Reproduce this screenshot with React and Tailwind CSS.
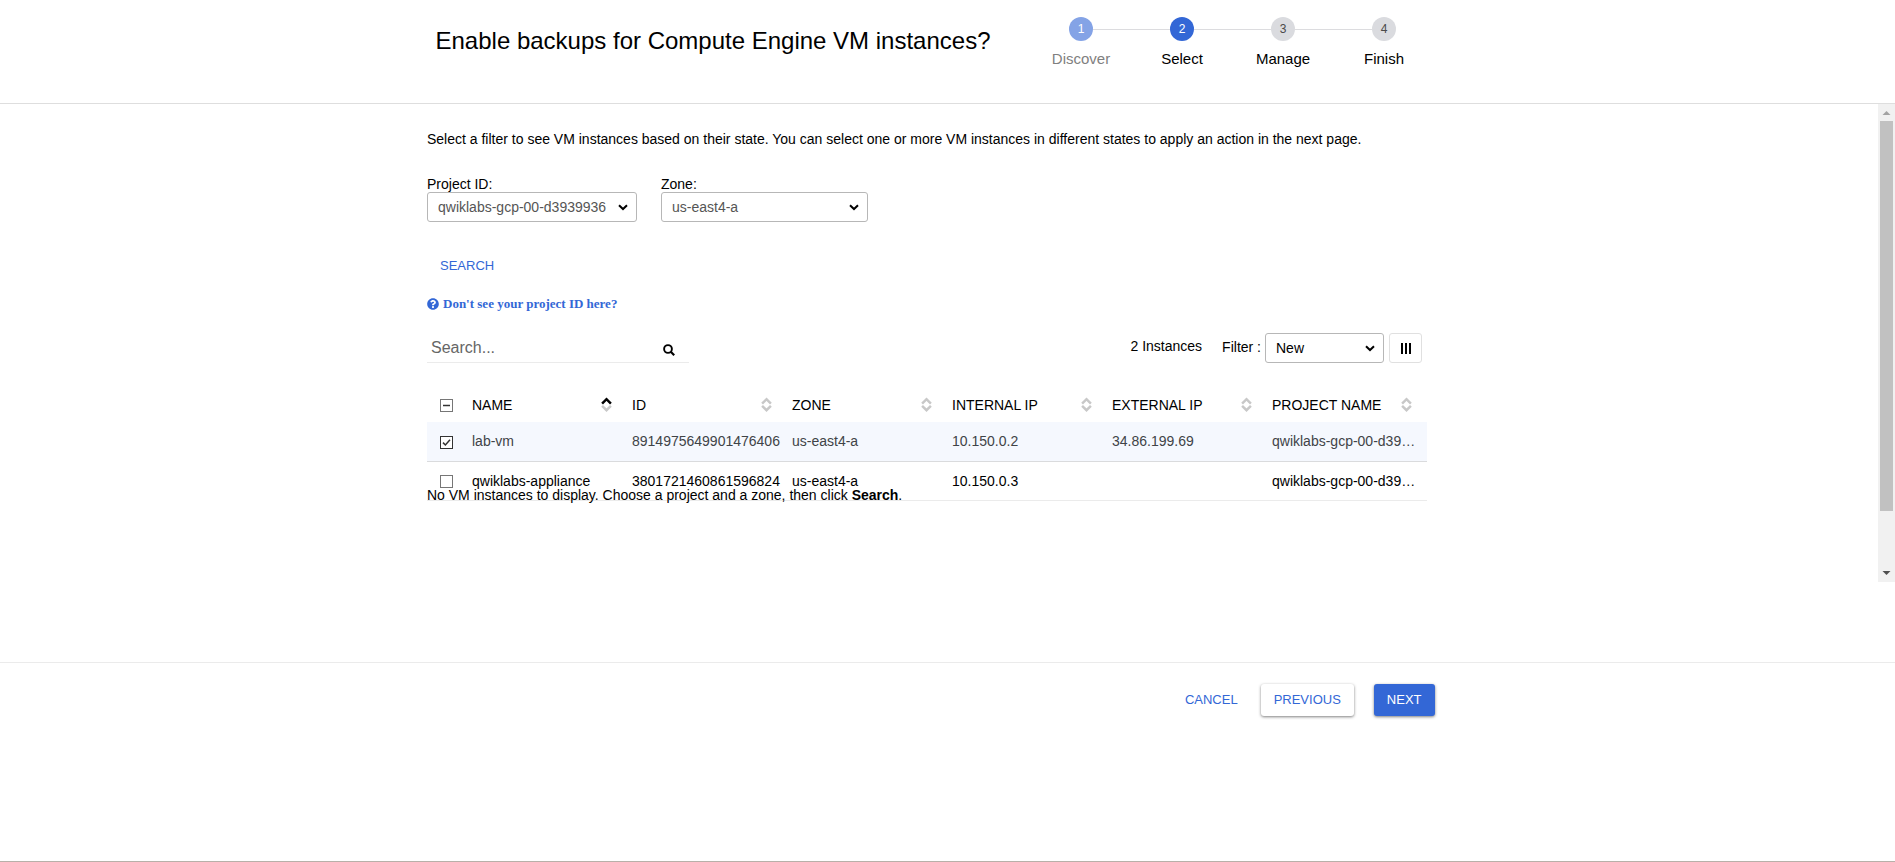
import { useEffect, useRef } from "react";
import { FaQuestionCircle } from "react-icons/fa";

const steps = [
  { label: "Discover", state: "done" },
  { label: "Select", state: "active" },
  { label: "Manage", state: "todo" },
  { label: "Finish", state: "todo" },
];

const circleStyles = {
  done: "bg-[#84a3e6] text-white",
  active: "bg-[#3367d6] text-white",
  todo: "bg-[#dadbdf] text-[#4a4a4a]",
};

const columns = ["NAME", "ID", "ZONE", "INTERNAL IP", "EXTERNAL IP", "PROJECT NAME"];

const rows = [
  {
    selected: true,
    cells: ["lab-vm", "8914975649901476406", "us-east4-a", "10.150.0.2", "34.86.199.69", "qwiklabs-gcp-00-d39…"],
  },
  {
    selected: false,
    cells: ["qwiklabs-appliance", "3801721460861596824", "us-east4-a", "10.150.0.3", "", "qwiklabs-gcp-00-d39…"],
  },
];

function Stepper() {
  return (
    <ol className="flex pt-[17px]">
      {steps.map((step, i) => (
        <li key={step.label} className="flex w-[101px] flex-col items-center gap-2">
          <div className="flex w-full items-center">
            <span className={i === 0 ? "h-px flex-1" : "h-px flex-1 bg-[#dcdcdf]"} />
            <span
              className={`flex size-6 items-center justify-center rounded-full text-xs ${circleStyles[step.state]}`}
            >
              {i + 1}
            </span>
            <span className={i === steps.length - 1 ? "h-px flex-1" : "h-px flex-1 bg-[#dcdcdf]"} />
          </div>
          <span className={step.state === "done" ? "text-[15px] leading-5 text-[#808080]" : "text-[15px] leading-5"}>
            {step.label}
          </span>
        </li>
      ))}
    </ol>
  );
}

function Select({ id, value, className }) {
  return (
    <div className={`grid items-center ${className}`}>
      <select
        id={id}
        defaultValue={value}
        className="col-start-1 row-start-1 h-[30px] w-full appearance-none rounded-[3px] border border-[#b7b7b7] bg-white pl-2.5 pr-7 text-sm leading-5"
      >
        <option>{value}</option>
      </select>
      <svg
        viewBox="0 0 10 7"
        className="pointer-events-none col-start-1 row-start-1 mr-[9px] h-[7px] w-2.5 justify-self-end"
        fill="none"
        stroke="#000"
        strokeWidth="2"
      >
        <path d="M1 1.2 5 5l4-3.8" />
      </svg>
    </div>
  );
}

function Checkbox({ label, checked, mixed }) {
  const ref = useRef(null);
  useEffect(() => {
    ref.current.indeterminate = Boolean(mixed);
  }, [mixed]);
  return (
    <span className="grid size-[13px] place-items-center">
      <input
        ref={ref}
        type="checkbox"
        aria-label={label}
        defaultChecked={checked}
        className={`col-start-1 row-start-1 size-[13px] appearance-none border bg-white ${
          checked ? "border-[#333]" : "border-[#767676]"
        }`}
      />
      {(checked || mixed) && (
        <svg
          viewBox="0 0 9 9"
          className="pointer-events-none col-start-1 row-start-1 size-[9px]"
          fill="none"
          stroke="#333"
          strokeWidth="1.5"
        >
          <path d={mixed ? "M1 4.5h7" : "M1 4.6 3.4 7 8 1.8"} />
        </svg>
      )}
    </span>
  );
}

function SortIcon({ ascending }) {
  return (
    <svg viewBox="0 0 11 16" className="h-4 w-[11px]" fill="none" strokeWidth="2.5">
      <path d="M1.1 6.6 5.5 2.2 9.9 6.6" stroke={ascending ? "#000" : "#c8c8c8"} />
      <path d="M1.1 8.8 5.5 13.2 9.9 8.8" stroke="#c8c8c8" />
    </svg>
  );
}

function InstanceTable() {
  return (
    <table className="mt-[25px] w-full table-fixed border-collapse text-left text-sm leading-5">
      <thead>
        <tr className="h-[34px]">
          <th className="w-10 pl-[13px]">
            <Checkbox label="Select all instances" mixed />
          </th>
          {columns.map((name, i) => (
            <th key={name} className="pl-[5px] pr-[15px] font-normal">
              <button type="button" className="flex w-full items-center justify-between">
                {name}
                <SortIcon ascending={i === 0} />
              </button>
            </th>
          ))}
        </tr>
      </thead>
      <tbody>
        {rows.map((row) => (
          <tr
            key={row.cells[0]}
            className={
              row.selected
                ? "h-[39px] border-b border-[#dadbdd] bg-[#f5f8fe] text-[#404347]"
                : "h-[39px] border-b border-[#ebebeb]"
            }
          >
            <td className="pl-[13px] pt-0.5">
              <Checkbox label={`Select ${row.cells[0]}`} checked={row.selected} />
            </td>
            {row.cells.map((cell, i) => (
              <td key={columns[i]} className="truncate pl-[5px] pr-1">
                {cell}
              </td>
            ))}
          </tr>
        ))}
      </tbody>
    </table>
  );
}

function Scrollbar() {
  return (
    <div aria-hidden="true" className="flex w-[17px] shrink-0 flex-col items-center bg-[#f1f1f1]">
      <svg viewBox="0 0 17 17" className="size-[17px]" fill="#a3a3a3">
        <path d="M8.5 7 12.5 11h-8z" />
      </svg>
      <div className="h-[390px] w-[13px] bg-[#c1c1c1]" />
      <svg viewBox="0 0 17 17" className="mt-auto size-[17px]" fill="#505050">
        <path d="M8.5 10 12.5 6h-8z" />
      </svg>
    </div>
  );
}

export default function App() {
  return (
    <div className="flex min-h-screen flex-col border-b border-[#b8b0a9] bg-white font-['Liberation_Sans',Arial,sans-serif] text-sm leading-5 text-black">
      <header className="border-b border-[#dedede]">
        <div className="mx-auto flex h-[103px] max-w-[1024px]">
          <h1 className="w-[595px] pt-[25px] text-2xl leading-8">Enable backups for Compute Engine VM instances?</h1>
          <Stepper />
        </div>
      </header>

      <div className="flex h-[478px]">
        <main className="min-w-0 flex-1">
          <div className="mx-auto flex max-w-[1024px] flex-col items-start pr-6 pt-[25px]">
            <p>
              Select a filter to see VM instances based on their state. You can select one or more VM instances in
              different states to apply an action in the next page.
            </p>

            <div className="mt-[27px] flex gap-6 leading-4">
              <div className="w-[210px]">
                <label htmlFor="project" className="block">
                  Project ID:
                </label>
                <Select id="project" value="qwiklabs-gcp-00-d3939936" className="text-[#555]" />
              </div>
              <div className="w-[207px]">
                <label htmlFor="zone" className="block">
                  Zone:
                </label>
                <Select id="zone" value="us-east4-a" className="text-[#555]" />
              </div>
            </div>

            <button type="button" className="mt-7 h-8 px-[13px] text-[13px] text-[#3367d6]">
              SEARCH
            </button>

            <a
              href="#help"
              className="mt-3 flex items-center gap-1 font-['Liberation_Serif','Times_New_Roman',serif] text-[13px] font-bold leading-5 text-[#3367d6]"
            >
              <FaQuestionCircle className="size-3" />
              Don't see your project ID here?
            </a>

            <div className="mt-[19px] flex w-full items-start justify-between">
              <div className="flex h-[30px] w-[262px] items-center border-b border-[#ebebeb] pl-1 pr-3.5">
                <input
                  type="text"
                  aria-label="Search instances"
                  placeholder="Search..."
                  className="min-w-0 flex-1 text-base leading-5 outline-none placeholder:text-[#666]"
                />
                <button type="button" aria-label="Search" className="pt-1">
                  <svg viewBox="0 0 12 12" className="size-3" fill="none" stroke="#000" strokeWidth="1.9">
                    <circle cx="5" cy="5" r="3.9" />
                    <path d="m7.8 7.8 3.4 3.4" strokeWidth="2.2" />
                  </svg>
                </button>
              </div>
              <div className="flex items-start pr-[5px]">
                <span className="mr-5 pt-[3px]">2 Instances</span>
                <label htmlFor="filter" className="mr-1 pt-1">
                  Filter :
                </label>
                <Select id="filter" value="New" className="w-[119px]" />
                <button
                  type="button"
                  aria-label="Choose columns"
                  className="ml-[5px] flex h-[30px] w-[33px] items-center justify-center gap-0.5 rounded-[3px] border border-[#e0e0e0]"
                >
                  <span className="h-[11px] w-0.5 bg-black" />
                  <span className="h-[11px] w-0.5 bg-black" />
                  <span className="h-[11px] w-0.5 bg-black" />
                </button>
              </div>
            </div>

            <InstanceTable />
            <p className="-mt-4">
              No VM instances to display. Choose a project and a zone, then click <b>Search</b>.
            </p>
          </div>
        </main>
        <Scrollbar />
      </div>

      <footer className="mt-20 border-t border-[#ebebeb]">
        <div className="mx-auto flex max-w-[1024px] items-center justify-end pr-[25px] pt-[21px] text-[13px]">
          <button type="button" className="mr-[23px] h-8 text-[#3367d6]">
            CANCEL
          </button>
          <button
            type="button"
            className="mr-5 h-8 rounded-[3px] bg-white px-[13px] text-[#3367d6] shadow-[0_1px_3px_rgba(0,0,0,0.5)]"
          >
            PREVIOUS
          </button>
          <button
            type="button"
            className="h-8 rounded-[3px] bg-[#3367d6] px-[13px] text-white shadow-[0_1px_3px_rgba(0,0,0,0.5)]"
          >
            NEXT
          </button>
        </div>
      </footer>
    </div>
  );
}
